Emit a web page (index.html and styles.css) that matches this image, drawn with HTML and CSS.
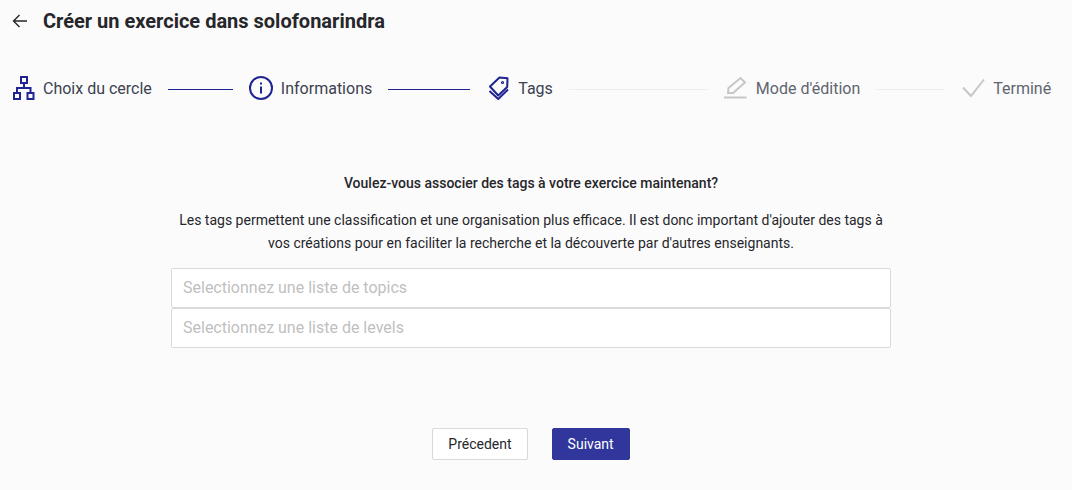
FILE: index.html
```html
<!DOCTYPE html>
<html lang="fr">
<head>
  <meta charset="UTF-8" />
  <title>Créer un exercice</title>
  <link rel="stylesheet" href="styles.css">
</head>
<body>
  <div class="page">
    <!-- Header -->
    <div class="page-header">
      <svg class="back-icon" width="16" height="14" viewBox="0 0 16 14" fill="none" stroke="#26262b" stroke-width="1.4">
        <path d="M15 7H1.500M7.500 1L1.500 7l6 6"/>
      </svg>
      <h1>Créer un exercice dans solofonarindra</h1>
    </div>

    <!-- Stepper -->
    <div class="stepper">
      <div class="step">
        <svg width="22" height="24" viewBox="0 0 22 24" fill="none" stroke="#1f2490" stroke-width="2">
          <rect x="8" y="1" width="6" height="6"/>
          <rect x="1" y="17" width="6" height="6"/>
          <rect x="14.500" y="17" width="6" height="6"/>
          <path d="M11 7v5M4 17v-5h13.500v5"/>
        </svg>
        <span>Choix du cercle</span>
      </div>
      <div class="step-line done line-short"></div>
      <div class="step">
        <svg width="24" height="24" viewBox="0 0 24 24" fill="none" stroke="#1f2490" stroke-width="2">
          <circle cx="12" cy="12" r="11"/>
          <path d="M12 10.500v7M12 6.500v2"/>
        </svg>
        <span>Informations</span>
      </div>
      <div class="step-line done line-mid"></div>
      <div class="step">
        <svg width="24" height="24" viewBox="0 0 24 24" fill="none" stroke="#1f2490" stroke-width="2" stroke-linejoin="round">
          <path d="M4 10.500L13.500 1.500l8 0.800-0.300 8.700-9 8.500z"/>
          <path d="M3.500 15l8.700 8 9.800-9.500"/>
          <circle cx="16.500" cy="6.500" r="1" stroke-width="1.200"/>
        </svg>
        <span>Tags</span>
      </div>
      <div class="step-line line-long"></div>
      <div class="step todo">
        <svg width="24" height="24" viewBox="0 0 24 24" fill="none" stroke="#c6c6c6" stroke-width="2">
          <path d="M4 17l0.500-5L16.500 2l4.500 4.500L9 17z"/>
          <path d="M0 21.500h22.500"/>
        </svg>
        <span>Mode d'édition</span>
      </div>
      <div class="step-line line-end"></div>
      <div class="step todo">
        <svg width="24" height="24" viewBox="0 0 24 24" fill="none" stroke="#c6c6c6" stroke-width="2">
          <path d="M2 11.500l8 8.500L23 3.500"/>
        </svg>
        <span>Terminé</span>
      </div>
    </div>

    <!-- Tags form -->
    <div class="content">
      <p class="question">Voulez-vous associer des tags à votre exercice maintenant?</p>
      <p class="description">Les tags permettent une classification et une organisation plus efficace. Il est donc important d'ajouter des tags à vos créations pour en faciliter la recherche et la découverte par d'autres enseignants.</p>
      <input class="tag-input" type="text" placeholder="Selectionnez une liste de topics" />
      <input class="tag-input" type="text" placeholder="Selectionnez une liste de levels" />
    </div>

    <div class="actions">
      <button class="btn btn-outline">Précedent</button>
      <button class="btn btn-primary">Suivant</button>
    </div>
  </div>
</body>
</html>
```

FILE: styles.css
```css
*, *::before, *::after {
  box-sizing: border-box;
}
body {
  margin: 0;
  font-family: Roboto, "Liberation Sans", sans-serif;
  background-color: #fbfbfb;
  color: #26262b;
}
.page {
  width: 1062px;
  height: 490px;
  overflow: hidden;
}
.page-header {
  display: flex;
  align-items: center;
  height: 42px;
  padding-left: 12px;
}
.back-icon {
  margin-right: 15px;
}
h1 {
  margin: 0;
  font-size: 20px;
  font-weight: 700;
}
.stepper {
  display: flex;
  align-items: center;
  margin-top: 34px;
  height: 24px;
  padding-left: 13px;
}
.step {
  display: flex;
  align-items: center;
  gap: 8px;
  font-size: 16px;
  color: #3c4250;
  white-space: nowrap;
}
.step.todo {
  color: #5f6570;
}
.step-line {
  height: 1px;
  margin: 2px 16px 0;
  background-color: #eeeeee;
}
.step-line.done {
  background-color: #1f2490;
}
.line-short {
  width: 65px;
}
.line-mid {
  width: 82px;
}
.line-long {
  width: 139px;
}
.line-end {
  width: 69px;
}
.content {
  width: 720px;
  margin: 0 auto;
  padding-top: 68px;
  text-align: center;
}
.question {
  margin: 0 0 11px;
  font-size: 14px;
  line-height: 30px;
  font-weight: 500;
}
.description {
  margin: 0 0 13px;
  font-size: 14px;
  line-height: 23px;
}
.tag-input {
  display: block;
  width: 100%;
  height: 40px;
  padding: 0 11px 2px;
  font-family: inherit;
  font-size: 16px;
  background-color: #fff;
  border: 1px solid #d9d9d9;
  border-radius: 2px;
}
.tag-input::placeholder {
  color: #bfbfbf;
}
.actions {
  display: flex;
  justify-content: center;
  gap: 24px;
  margin-top: 80px;
}
.btn {
  height: 32px;
  padding: 0 15px;
  font-family: inherit;
  font-size: 14px;
  border-radius: 2px;
  cursor: pointer;
}
.btn-outline {
  color: #26262b;
  background-color: #fff;
  border: 1px solid #d9d9d9;
}
.btn-primary {
  color: #fff;
  background-color: #30369c;
  border: 1px solid #30369c;
}
```
